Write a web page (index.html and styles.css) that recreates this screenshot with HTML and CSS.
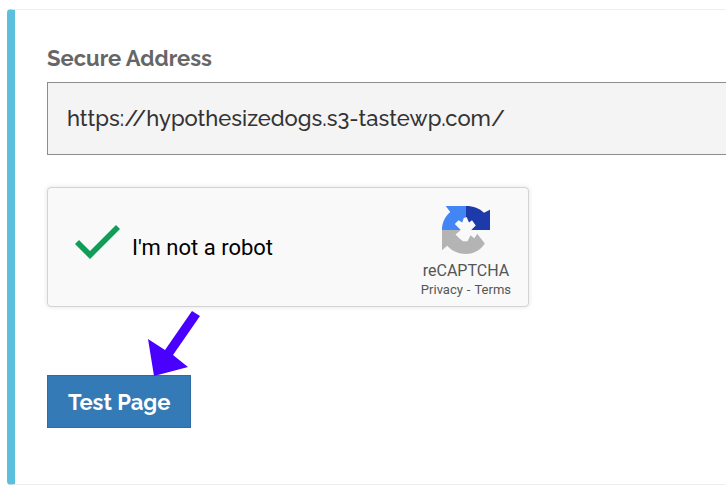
FILE: index.html
```html
<!DOCTYPE html>
<html lang="en">
<head>
  <meta charset="UTF-8" />
  <title>Secure Address</title>
  <meta name="viewport" content="width=device-width, initial-scale=1.0" />
  <link rel="stylesheet" href="styles.css">
</head>
<body>
  <form class="panel">
    <label class="address-label" for="address">Secure Address</label>
    <input class="address" id="address" type="text" value="https://hypothesizedogs.s3-tastewp.com/" readonly />

    <div class="captcha">
      <input class="captcha-check" id="robot" type="checkbox" checked />
      <label class="captcha-label" for="robot">I'm not a robot</label>
      <div class="captcha-brand">
        <svg class="captcha-logo" viewBox="0 0 64 64" aria-hidden="true">
          <path fill="#1c3aa9" d="M32 0C42 0 50 3 56 9L64 5V32H39L45 26 40 19 36 22 33 15H32Z" />
          <path fill="#4285f4" d="M32 0H5L11 8C4 14 0 22 0 32H25L17 24 22 19 27 22 29 16 32 15Z" />
          <path fill="#b4b4b4" d="M0 32V59L7 53C13 60 22 64 32 64 43 64 52 58 57 50L47 37 43 43 38 39 34 47 28 47 23 43 18 38 25 32Z" />
        </svg>
        <div class="captcha-name">reCAPTCHA</div>
        <div class="captcha-links"><a href="#privacy">Privacy</a><span>-</span><a href="#terms">Terms</a></div>
      </div>
    </div>

    <div class="actions">
      <button class="test-button" type="button">Test Page</button>
      <svg class="arrow" viewBox="0 0 52 65" aria-hidden="true">
        <path fill="#4a00ff" d="M44 0 52 5 25 44 40 56 6 65 0 28 17 39Z" />
      </svg>
    </div>
  </form>
</body>
</html>
```
FILE: styles.css
```css
* {
  box-sizing: border-box;
}
body {
  margin: 0;
  background: #fff;
  font-family: Raleway, Lato, sans-serif;
  overflow-x: hidden;
}
.panel {
  margin: 9px -8px 9px 7px;
  padding: 34px 0 56px 32px;
  border: 1px solid #eee;
  border-left: 8px solid #5bc0de;
  border-radius: 4px;
}
.address-label {
  display: block;
  margin-bottom: 10px;
  font-size: 22px;
  line-height: 28px;
  font-weight: bold;
  color: #666;
}
.address {
  display: block;
  width: 100%;
  height: 73px;
  padding: 0 19px 2px;
  border: 1px solid #8c8c8c;
  border-right: 0;
  border-radius: 0;
  background: #f4f4f4;
  font-family: inherit;
  font-size: 22px;
  font-weight: 500;
  color: #333;
  outline: none;
}
.captcha {
  display: flex;
  align-items: center;
  width: 482px;
  max-width: 100%;
  height: 120px;
  margin-top: 32px;
  padding: 0 17px 0 27px;
  border: 1px solid #d3d3d3;
  border-radius: 4px;
  background: #f9f9f9;
  box-shadow: 0 0 4px 1px rgba(0, 0, 0, 0.08);
  font-family: Roboto, sans-serif;
}
.captcha-check {
  appearance: none;
  width: 45px;
  height: 34px;
  margin: 0 12px 10px 0;
  background: #0f9d58;
  clip-path: polygon(0 19px, 4px 15px, 15px 26px, 41px 0, 45px 4px, 15px 34px);
}
.captcha-label {
  font-size: 22px;
  color: #000;
}
.captcha-brand {
  display: flex;
  flex-direction: column;
  align-items: center;
  margin-left: auto;
  padding-top: 11px;
  color: #555;
}
.captcha-logo {
  width: 48px;
  height: 48px;
}
.captcha-name {
  margin-top: 7px;
  font-size: 16px;
  line-height: 20px;
}
.captcha-links {
  display: flex;
  gap: 4px;
  font-size: 13px;
  line-height: 18px;
}
.captcha-links a {
  color: inherit;
  text-decoration: none;
}
.actions {
  position: relative;
  margin-top: 68px;
}
.test-button {
  display: block;
  padding: 13px 20px 11px;
  border: 1px solid #2e6da4;
  background: #337ab7;
  font-family: inherit;
  font-size: 22px;
  line-height: 27px;
  font-weight: bold;
  color: #fff;
}
/* points down at the button */
.arrow {
  position: absolute;
  top: -64px;
  left: 101px;
  width: 52px;
  height: 65px;
}
```
